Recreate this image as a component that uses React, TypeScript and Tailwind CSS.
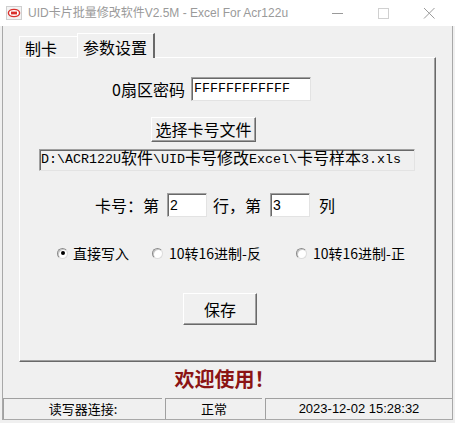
const CJK = "font-['Noto_Sans_CJK_SC',sans-serif]";

function Radio({ checked }: { checked?: boolean }) {
  return (
    <span className="flex h-[11px] w-[11px] items-center justify-center rounded-full border border-t-[#8a8a8a] border-l-[#8a8a8a] border-r-[#dcdcdc] border-b-[#dcdcdc] bg-white shadow-[inset_1px_1px_0_#c8c8c8]">
      {checked && <span className="h-[4px] w-[4px] rounded-full bg-black" />}
    </span>
  );
}

const sunken =
  'border border-t-[#a0a0a0] border-l-[#a0a0a0] border-r-[#e3e3e3] border-b-[#e3e3e3] shadow-[inset_1px_1px_0_#696969]';
const raised =
  'border border-t-white border-l-white border-r-[#696969] border-b-[#696969] shadow-[inset_-1px_-1px_0_#a0a0a0] bg-[#f0f0f0]';

export default function App() {
  return (
    <div className="h-[423px] w-[455px] overflow-hidden bg-[#f7f7f7]">
      {/* title bar */}
      <div className="flex h-[26px] w-[455px] items-center bg-white">
        <svg width="16" height="14" viewBox="0 0 16 14" className="ml-[6px]">
          <rect x="0.5" y="0.5" width="15" height="13" fill="#f3f3f3" stroke="#cfcfcf" />
          <ellipse cx="8" cy="7" rx="5.6" ry="3.6" fill="#fff" stroke="#d9302c" strokeWidth="1.4" />
          <rect x="5" y="5.6" width="6" height="2.8" fill="#d9302c" />
        </svg>
        <span className={`ml-[6px] text-[12px] text-[#9a9a9a] font-['Liberation_Sans','Noto_Sans_CJK_SC',sans-serif]`}>
          UID卡片批量修改软件V2.5M - Excel For Acr122u
        </span>
        <div className="ml-auto mr-[3px] flex items-center">
          <svg width="46" height="26" viewBox="0 0 46 26">
            <line x1="18" y1="13.5" x2="29" y2="13.5" stroke="#9a9a9a" strokeWidth="1" />
          </svg>
          <svg width="46" height="26" viewBox="0 0 46 26">
            <rect x="18.5" y="8.5" width="10" height="10" fill="none" stroke="#d0d0d0" strokeWidth="1" />
          </svg>
          <svg width="46" height="26" viewBox="0 0 46 26">
            <path d="M18 8 L28.5 18.5 M28.5 8 L18 18.5" stroke="#9a9a9a" strokeWidth="1" />
          </svg>
        </div>
      </div>

      {/* client area */}
      <div className="h-[397px] w-[455px] bg-[#f0f0f0] pl-[2px]">
        <div className="flex h-[394px] w-[451px] flex-col border-x border-b border-[#a8a8a8]">
          {/* tabs */}
          <div className={`ml-[16px] mt-[7px] flex h-[24px] items-end text-[16px] leading-none text-black ${CJK}`}>
            <div className="flex h-[21px] w-[58px] items-center border-l border-t border-white pl-[5px] pt-[2px]">
              制卡
            </div>
            <div className="relative z-10 -mb-px flex h-[25px] w-[78px] items-center border-l border-r-2 border-t border-l-white border-t-white border-r-[#696969] bg-[#f0f0f0] pl-[5px] pt-[1px]">
              参数设置
            </div>
          </div>

          {/* panel */}
          <div className={`ml-[16px] flex h-[305px] w-[417px] flex-col ${raised} text-[16px] leading-none text-black ${CJK}`}>
            {/* sector password */}
            <div className="ml-[92px] mt-[19px] flex h-[24px] items-center">
              <span className="w-[79px]">0扇区密码</span>
              <div className={`flex h-[24px] w-[120px] items-center bg-white pl-[2px] ${sunken} font-['Liberation_Mono',monospace] text-[13.33px]`}>
                FFFFFFFFFFFF
              </div>
            </div>

            {/* choose file */}
            <button className={`ml-[131px] mt-[16px] flex h-[25px] w-[105px] items-center justify-center ${raised} pb-[1px]`}>
              选择卡号文件
            </button>

            {/* path */}
            <div className={`ml-[19px] mt-[7px] flex h-[22px] w-[376px] items-center bg-[#f0f0f0] pl-[1px] ${sunken} font-['Liberation_Mono','Noto_Sans_CJK_SC',monospace] text-[13.33px] whitespace-nowrap`}>
              <span>D:\ACR122U</span>
              <span className="text-[16px]">软件</span>
              <span>\UID</span>
              <span className="text-[16px]">卡号修改</span>
              <span>Excel\</span>
              <span className="text-[16px]">卡号样本</span>
              <span>3.xls</span>
            </div>

            {/* row / column */}
            <div className="ml-[75px] mt-[22px] flex h-[24px] items-center">
              <span>卡号：第</span>
              <div className={`ml-[8px] flex h-[24px] w-[40px] items-center bg-white pl-[2px] ${sunken} font-['Liberation_Sans',sans-serif] text-[14px]`}>
                2
              </div>
              <span className="ml-[6px]">行，第</span>
              <div className={`ml-[9px] flex h-[24px] w-[40px] items-center bg-white pl-[2px] ${sunken} font-['Liberation_Sans',sans-serif] text-[14px]`}>
                3
              </div>
              <span className="ml-[9px]">列</span>
            </div>

            {/* radios */}
            <div className="ml-[37px] mt-[28px] flex h-[16px] items-center text-[14px]">
              <div className="flex w-[95px] items-center gap-[5px]">
                <Radio checked />
                <span>直接写入</span>
              </div>
              <div className="flex w-[144px] items-center gap-[6px]">
                <Radio />
                <span>10转16进制-反</span>
              </div>
              <div className="flex items-center gap-[6px]">
                <Radio />
                <span>10转16进制-正</span>
              </div>
            </div>

            {/* save */}
            <button className={`ml-[163px] mt-[32px] flex h-[32px] w-[74px] items-center justify-center ${raised}`}>
              保存
            </button>
          </div>

          {/* welcome */}
          <div className="flex h-[36px] items-center justify-center pr-[6px]">
            <span className={`text-[20px] font-bold leading-none text-[#8b1414] font-['Liberation_Serif','Noto_Sans_CJK_SC',serif]`}>
              欢迎使用！
            </span>
          </div>

          {/* status bar */}
          <div className={`flex h-[21px] gap-[3px] text-[13px] leading-none text-black ${CJK}`}>
            <div className="flex w-[159px] items-center justify-center border-l border-t border-[#a0a0a0] pb-[1px]">
              读写器连接:
            </div>
            <div className="flex w-[97px] items-center justify-center border-l border-t border-[#a0a0a0] pb-[1px]">
              正常
            </div>
            <div className="flex flex-1 items-center justify-center border-l border-t border-[#a0a0a0] pb-[1px] font-['Liberation_Sans',sans-serif]">
              2023-12-02 15:28:32
            </div>
          </div>
        </div>
      </div>
    </div>
  );
}
